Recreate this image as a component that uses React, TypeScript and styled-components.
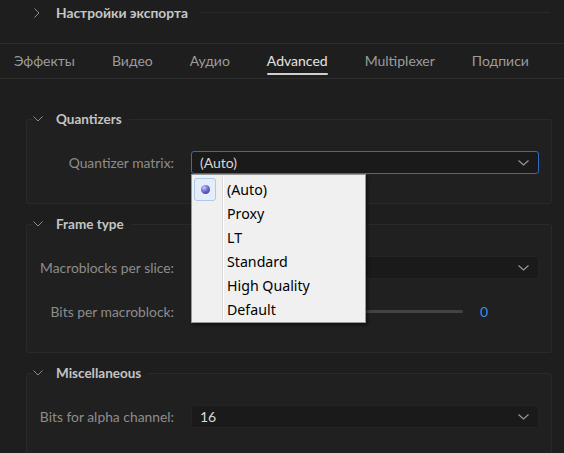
import React from 'react';
import styled, { createGlobalStyle } from 'styled-components';

const GlobalStyle = createGlobalStyle`
  html, body {
    margin: 0;
    padding: 0;
    background: #1e1e1e;
  }
  body {
    font-family: Lato, "Liberation Sans", sans-serif;
  }
`;

const Screen = styled.div`
  width: 564px;
  height: 453px;
  overflow: hidden;
  background: #1e1e1e;
`;

const ExportHeader = styled.div`
  display: flex;
  align-items: center;
  height: 25px;
  padding: 0 14px 0 33px;
`;

const HeaderTitle = styled.span`
  margin-left: 15px;
  font-size: 13.8px;
  font-weight: 700;
  color: #c6c6c6;
`;

const HeaderRule = styled.div`
  flex: 1;
  height: 1px;
  margin-left: 12px;
  background: #2a2a2a;
`;

const TabBar = styled.div`
  display: flex;
  gap: 37px;
  height: 34px;
  margin-top: 18px;
  padding-left: 14px;
  border-top: 1px solid #2c2c2c;
  border-bottom: 1px solid #2c2c2c;
`;

const Tab = styled.div<{ $active?: boolean }>`
  display: flex;
  flex-direction: column;
  padding-top: 8px;
  font-size: 14px;
  line-height: 18px;
  color: ${p => (p.$active ? '#e4e4e4' : '#9c9c9c')};

  &::after {
    content: '';
    height: 2px;
    margin-top: 3px;
    border-radius: 1px;
    background: ${p => (p.$active ? '#cfcfcf' : 'transparent')};
  }
`;

const Content = styled.div`
  padding-top: 31px;
`;

const Group = styled.fieldset`
  min-width: 0;
  margin: 0 12px 11px 26px;
  padding: 23px 12px 29px 0;
  border: 1px solid #292929;
  border-radius: 2px;
  background: #202020;
`;

const Legend = styled.legend`
  display: flex;
  align-items: center;
  height: 18px;
  margin-left: 6px;
  padding: 0 7px 0 0;
`;

const LegendTitle = styled.span`
  margin-left: 13px;
  font-size: 13.5px;
  font-weight: 700;
  color: #c4c4c4;
`;

const Rows = styled.div`
  display: flex;
  flex-direction: column;
  gap: 21px;
`;

const Row = styled.div`
  display: grid;
  grid-template-columns: 147px 1fr;
  column-gap: 17px;
  align-items: center;
`;

const Label = styled.span`
  text-align: right;
  font-size: 13.85px;
  color: #8d8d8d;
  white-space: nowrap;
`;

const SelectWrap = styled.div`
  position: relative;
`;

const Select = styled.div<{ $focused?: boolean }>`
  display: flex;
  align-items: center;
  justify-content: space-between;
  box-sizing: border-box;
  height: 23px;
  padding: 0 9px 0 8px;
  border: 1px solid ${p => (p.$focused ? '#2f6ebf' : '#242424')};
  border-radius: 3px;
  background: #1a1a1a;
  font-size: 14px;
  color: #d8d8d8;
`;

const Menu = styled.div`
  position: absolute;
  top: 100%;
  left: 0;
  z-index: 5;
  box-sizing: border-box;
  width: 175px;
  padding: 2px 0 1px;
  border: 1px solid #979797;
  background: #f0f0f0;
  box-shadow: 2px 2px 3px rgba(0, 0, 0, 0.45);
  font-family: "Noto Sans", "Open Sans", sans-serif;

  &::before {
    content: '';
    position: absolute;
    top: 2px;
    bottom: 2px;
    left: 30px;
    width: 1px;
    background: #d7d7d7;
    box-shadow: 1px 0 0 #ffffff;
  }
`;

const MenuItem = styled.div`
  display: flex;
  align-items: center;
  height: 24px;
  font-size: 14.2px;
  color: #000;
`;

const Gutter = styled.div`
  display: flex;
  align-items: center;
  width: 35px;
  flex-shrink: 0;
`;

const CheckMark = styled.div`
  display: flex;
  align-items: center;
  justify-content: center;
  box-sizing: border-box;
  width: 22px;
  height: 23px;
  margin-left: 2px;
  border: 1px solid #a9c9ee;
  border-radius: 3px;
  background: #e4edf9;
`;

const RadioDot = styled.div`
  width: 9px;
  height: 9px;
  border-radius: 50%;
  background: radial-gradient(circle at 35% 30%, #c8c8ff 0%, #6a6ad0 45%, #2a2a7a 100%);
`;

const SliderRow = styled.div`
  display: flex;
  align-items: center;
  height: 23px;
`;

const Track = styled.div`
  flex: 1;
  height: 3px;
  border-radius: 2px;
  background: #434343;
`;

const SliderValue = styled.span`
  width: 59px;
  padding-left: 17px;
  font-size: 14px;
  color: #3a8ee6;
`;

const Chevron = ({ dir }: { dir: 'down' | 'right' }) =>
  dir === 'down' ? (
    <svg width="10" height="6" viewBox="0 0 10 6" fill="none">
      <path d="M0.5 0.5 L5 5 L9.5 0.5" stroke="#8c8c8c" strokeWidth="1" />
    </svg>
  ) : (
    <svg width="8" height="10" viewBox="0 0 8 10" fill="none">
      <path d="M1.5 0.5 L6 5 L1.5 9.5" stroke="#8c8c8c" strokeWidth="1" />
    </svg>
  );

const SelectArrow = () => (
  <svg width="11" height="6" viewBox="0 0 11 6" fill="none">
    <path d="M0.5 0.5 L5.5 5 L10.5 0.5" stroke="#9a9a9a" strokeWidth="1.1" />
  </svg>
);

const tabs = ['Эффекты', 'Видео', 'Аудио', 'Advanced', 'Multiplexer', 'Подписи'];
const matrixOptions = ['(Auto)', 'Proxy', 'LT', 'Standard', 'High Quality', 'Default'];

export default function App() {
  return (
    <>
      <GlobalStyle />
      <Screen>
        <ExportHeader>
          <Chevron dir="right" />
          <HeaderTitle>Настройки экспорта</HeaderTitle>
          <HeaderRule />
        </ExportHeader>

        <TabBar>
          {tabs.map(t => (
            <Tab key={t} $active={t === 'Advanced'}>{t}</Tab>
          ))}
        </TabBar>

        <Content>
          <Group>
            <Legend>
              <Chevron dir="down" />
              <LegendTitle>Quantizers</LegendTitle>
            </Legend>
            <Rows>
              <Row>
                <Label>Quantizer matrix:</Label>
                <SelectWrap>
                  <Select $focused>
                    <span>(Auto)</span>
                    <SelectArrow />
                  </Select>
                  <Menu>
                    {matrixOptions.map((o, i) => (
                      <MenuItem key={o}>
                        <Gutter>
                          {i === 0 && (
                            <CheckMark>
                              <RadioDot />
                            </CheckMark>
                          )}
                        </Gutter>
                        {o}
                      </MenuItem>
                    ))}
                  </Menu>
                </SelectWrap>
              </Row>
            </Rows>
          </Group>

          <Group>
            <Legend>
              <Chevron dir="down" />
              <LegendTitle>Frame type</LegendTitle>
            </Legend>
            <Rows>
              <Row>
                <Label>Macroblocks per slice:</Label>
                <Select>
                  <span />
                  <SelectArrow />
                </Select>
              </Row>
              <Row>
                <Label>Bits per macroblock:</Label>
                <SliderRow>
                  <Track />
                  <SliderValue>0</SliderValue>
                </SliderRow>
              </Row>
            </Rows>
          </Group>

          <Group>
            <Legend>
              <Chevron dir="down" />
              <LegendTitle>Miscellaneous</LegendTitle>
            </Legend>
            <Rows>
              <Row>
                <Label>Bits for alpha channel:</Label>
                <Select>
                  <span>16</span>
                  <SelectArrow />
                </Select>
              </Row>
            </Rows>
          </Group>
        </Content>
      </Screen>
    </>
  );
}
